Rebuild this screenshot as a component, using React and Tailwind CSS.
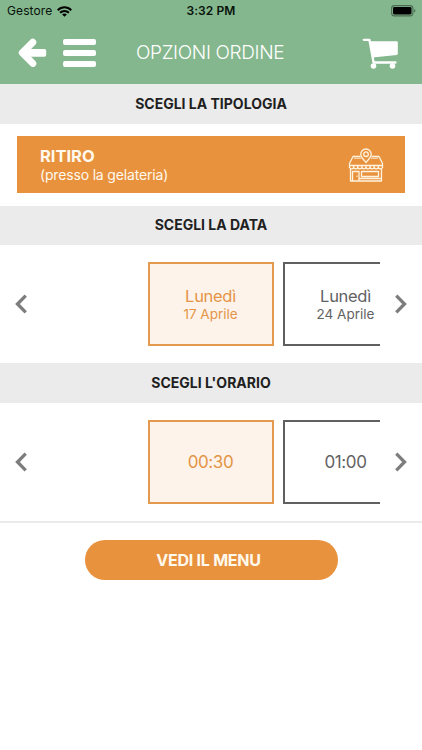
import React from "react";

function Wifi() {
  return (
    <svg width="15" height="11" viewBox="0 0 15 11" fill="none" stroke="#000" strokeWidth="2.1">
      <path d="M.7 4.2C4.6.2 10.4.2 14.3 4.2" />
      <path d="M3.1 6.8c2.5-2.5 6.3-2.5 8.8 0" />
      <path d="M7.5 10.8 5.1 8.4c1.4-1.3 3.4-1.3 4.8 0z" fill="#000" stroke="none" />
    </svg>
  );
}

function Battery() {
  return (
    <svg width="26" height="12" viewBox="0 0 26 12">
      <rect x=".6" y=".6" width="21.3" height="10.3" rx="2.8" fill="none" stroke="#4b6b52" strokeWidth="1.1" />
      <rect x="2" y="2" width="18.5" height="7.5" rx="1.4" fill="#000" />
      <path d="M23.3 4c1.4.4 1.4 3.1 0 3.5z" fill="#3f5a45" />
    </svg>
  );
}

function BackArrow() {
  return (
    <svg width="30" height="32" viewBox="0 0 30 32" fill="none" stroke="#fff" strokeLinejoin="round">
      <path d="M15.800 5.200 5.300 15.800 15.800 26.400" strokeWidth="7" strokeLinecap="round" />
      <rect x="8" y="12.800" width="20.300" height="6" rx="1" fill="#fff" strokeWidth="1.800" />
    </svg>
  );
}

function Cart() {
  return (
    <svg width="38" height="32" viewBox="0 0 38 32" fill="#fff">
      <path d="M1.8 1.8h5.600l4.200 22.700h21.900" fill="none" stroke="#fff" strokeWidth="2.300" strokeLinecap="round" strokeLinejoin="round" />
      <path d="M7.800 3.200h27q1 0 1 1v11.600q0 1-1 1.100l-24.200 2.600z" />
      <circle cx="11.500" cy="28" r="2.800" />
      <circle cx="30.500" cy="28" r="2.800" />
    </svg>
  );
}

function Store() {
  return (
    <svg width="36" height="34" viewBox="0 0 36 34" fill="none" stroke="#fff4df" strokeWidth="1.300" strokeLinejoin="round">
      <path d="M12.500 8.500H5L1.500 15.500v2h33v-2L31 8.500h-7.500" />
      <path d="M6 10.300h7.500m9.500 0h7" strokeWidth=".8" />
      <path d="M1.500 17.500v2.200q2 2.400 4.100 0 2.100 2.400 4.200 0 2.100 2.400 4.100 0 2.100 2.400 4.100 0 2.100 2.400 4.100 0 2.100 2.400 4.100 0 2.100 2.400 4.200 0 2.100 2.400 4.100 0v-2.200" />
      <path d="M5.600 17.500v2.200m4.200-2.200v2.200m4.100-2.200v2.200m4.100-2.200v2.200m4.100-2.200v2.200m4.100-2.200v2.200m4.200-2.200v2.200" />
      <path d="M2.500 21v12h31V21M4.500 33V23.500h6.500V33M13.500 23.500h17v5h-17zM11 30.500h22" strokeWidth="1.300" />
      <path d="M9 27.500v1.500" strokeWidth="1" />
      <path d="M18 14.500C15.500 11.400 12.800 9.200 12.800 6.200a5.200 5.200 0 0 1 10.400 0c0 3-2.700 5.200-5.200 8.300z" fill="#e8923e" />
      <circle cx="18" cy="6.200" r="2.300" />
    </svg>
  );
}

function Chevron({ left }) {
  return (
    <svg className={left ? "rotate-180" : ""} width="12" height="20" viewBox="0 0 12 20" fill="none" stroke="#7d7d7d" strokeWidth="3.300">
      <path d="M1.300 1.700 9.500 10l-8.200 8.300" />
    </svg>
  );
}

function Band({ children, className }) {
  return (
    <h2 className={`flex shrink-0 items-center justify-center bg-[#ebebeb] text-[14px] font-bold text-[#1f1f1f] ${className}`}>
      {children}
    </h2>
  );
}

function Picker({ children }) {
  return (
    <div className="flex h-[84px] shrink-0 items-center">
      <button className="flex w-[42px] pl-[15px]"><Chevron left /></button>
      <div className="flex h-full w-[338px] gap-[9px] overflow-hidden pl-[105.500px]">{children}</div>
      <button className="flex w-[42px] pl-[15px]"><Chevron /></button>
    </div>
  );
}

function Option({ selected, children }) {
  return (
    <button className={`flex h-full w-[126px] shrink-0 flex-col items-center justify-center border-2 ${selected ? "border-[#e39a4e] bg-[#fdf3ea] text-[#e49547]" : "border-[#606060] bg-white text-[#626262]"}`}>
      {children}
    </button>
  );
}

function DateLabel({ day, date }) {
  return (
    <>
      <span className="text-[16.500px] leading-[20px] tracking-[-0.300px]">{day}</span>
      <span className="text-[13.500px] leading-[17px]">{date}</span>
    </>
  );
}

function TimeLabel({ children }) {
  return <span className="pt-[2px] text-[17px] tracking-[-0.400px]">{children}</span>;
}

export default function App() {
  return (
    <main className="flex h-[750px] w-[422px] flex-col overflow-hidden bg-white font-['Inter',sans-serif]">
      <header className="h-[84px] shrink-0 bg-[#84b78d]">
        <div className="grid h-[22px] grid-cols-3 items-center text-[12px] leading-[22px] text-[#07120a]">
          <div className="flex items-center gap-[5px] pl-[7px]"><span className="tracking-[0.1px]">Gestore</span><Wifi /></div>
          <span className="text-center font-semibold tracking-[0.100px]">3:32 PM</span>
          <div className="flex justify-end pr-[5px]"><Battery /></div>
        </div>
        <div className="flex h-[62px] items-center">
          <div className="flex w-[136px] items-center pl-[17px]">
            <BackArrow />
            <div className="ml-[16px] flex flex-col gap-[5px] pb-[1px]">
              <i className="h-[6px] w-[33px] rounded-[2px] bg-white" />
              <i className="h-[6px] w-[33px] rounded-[2px] bg-white" />
              <i className="h-[6px] w-[33px] rounded-[2px] bg-white" />
            </div>
          </div>
          <h1 className="w-[150px] whitespace-nowrap pt-px text-[19px] font-light tracking-[-0.350px] text-white">OPZIONI ORDINE</h1>
          <div className="ml-[76px] pt-[2px]"><Cart /></div>
        </div>
      </header>
      <Band className="h-[40px] pb-px">SCEGLI LA TIPOLOGIA</Band>
      <section className="h-[82px] shrink-0 px-[17px] pt-[12px]">
        <button className="flex h-[57px] w-full items-center justify-between bg-[#e8923e] pl-[23px] pr-[21px] text-left text-[#fff9ed]">
          <span className="flex flex-col">
            <strong className="text-[16.500px] font-bold leading-[20px]">RITIRO</strong>
            <span className="text-[14px] leading-[17px] tracking-[-0.170px]">(presso la gelateria)</span>
          </span>
          <Store />
        </button>
      </section>
      <Band className="h-[39px] pb-[2px]">SCEGLI LA DATA</Band>
      <section className="flex h-[118px] shrink-0 flex-col justify-center">
        <Picker>
          <Option selected><DateLabel day="Lunedì" date="17 Aprile" /></Option>
          <Option><DateLabel day="Lunedì" date="24 Aprile" /></Option>
        </Picker>
      </section>
      <Band className="h-[40px] pb-px">SCEGLI L'ORARIO</Band>
      <section className="h-[120px] shrink-0 border-b-2 border-[#ebebeb] pt-[17px]">
        <Picker>
          <Option selected><TimeLabel>00:30</TimeLabel></Option>
          <Option><TimeLabel>01:00</TimeLabel></Option>
        </Picker>
      </section>
      <button className="mt-[17px] h-[40px] w-[253px] self-center rounded-full bg-[#e8923e] pr-[5px] text-[16px] font-bold tracking-[-0.250px] text-[#fff9ed]">VEDI IL MENU</button>
    </main>
  );
}
